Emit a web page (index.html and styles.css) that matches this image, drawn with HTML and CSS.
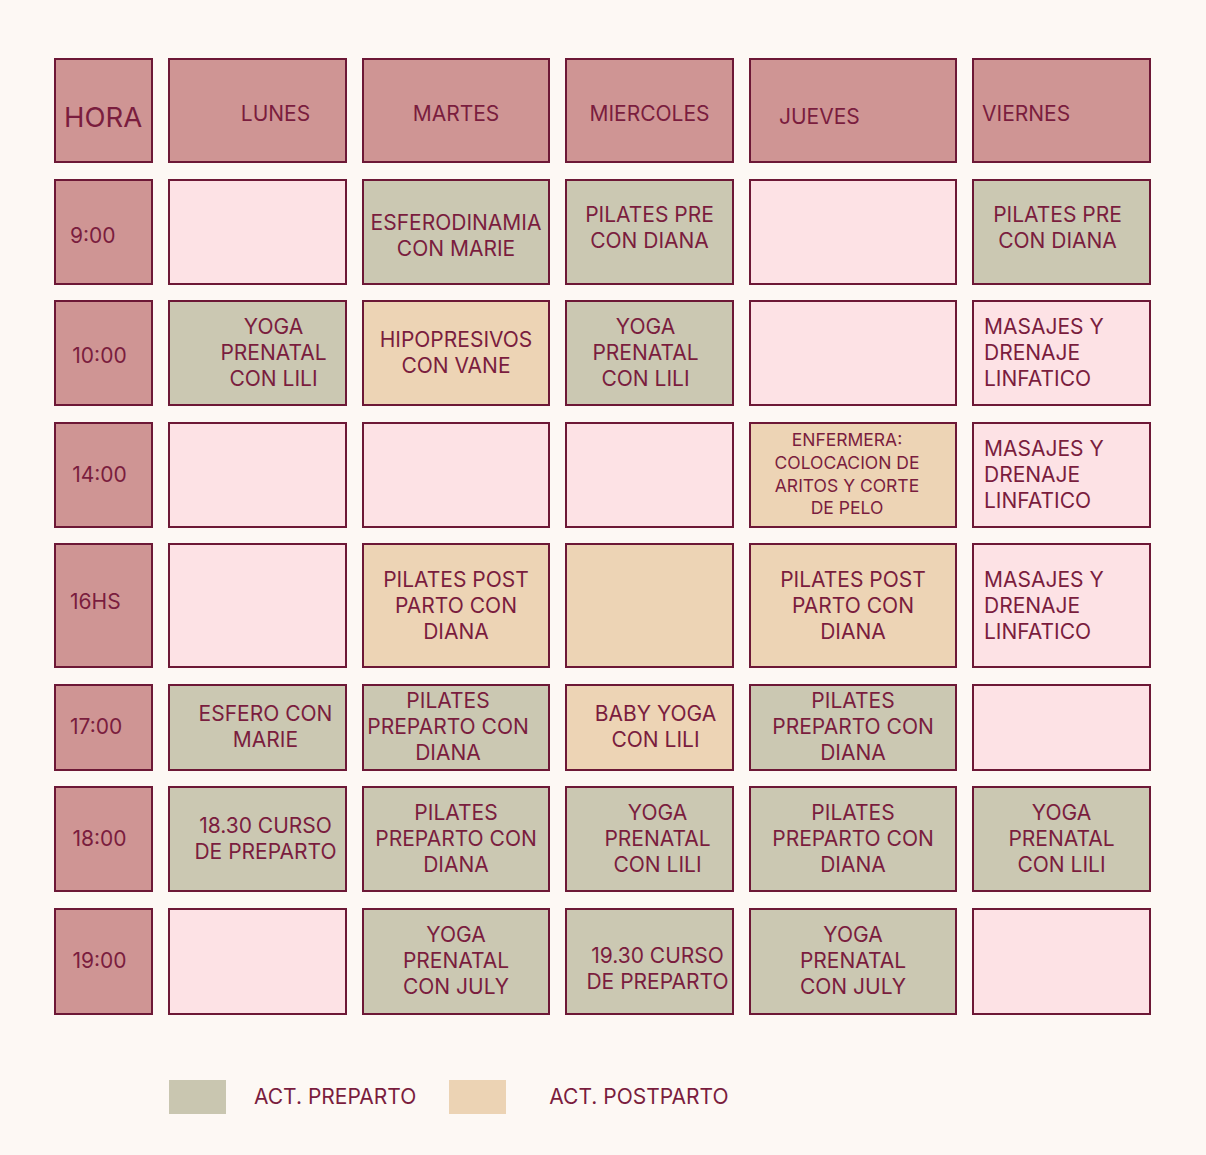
FILE: index.html
```html
<!DOCTYPE html>
<html lang="es">
<head>
<meta charset="utf-8">
<title>Horario</title>
<link rel="stylesheet" href="styles.css">
</head>
<body>
<div class="page">
  <div class="grid">
    <div class="cell head hora l pl8 oy12">HORA</div>
    <div class="cell head ox18 oy6">LUNES</div>
    <div class="cell head oy6">MARTES</div>
    <div class="cell head oy6">MIERCOLES</div>
    <div class="cell head l pl28 oy12">JUEVES</div>
    <div class="cell head l pl8 oy6">VIERNES</div>

    <div class="cell head l pl14 oy4">9:00</div>
    <div class="cell empty"></div>
    <div class="cell pre oy4">ESFERODINAMIA<br>CON MARIE</div>
    <div class="cell pre oy-6">PILATES PRE<br>CON DIANA</div>
    <div class="cell empty"></div>
    <div class="cell pre oy-6 ox-4">PILATES PRE<br>CON DIANA</div>

    <div class="cell head ox-4 oy6">10:00</div>
    <div class="cell pre ox16">YOGA<br>PRENATAL<br>CON LILI</div>
    <div class="cell post">HIPOPRESIVOS<br>CON VANE</div>
    <div class="cell pre ox-4">YOGA<br>PRENATAL<br>CON LILI</div>
    <div class="cell empty"></div>
    <div class="cell empty l pl10 tl">MASAJES Y<br>DRENAJE<br>LINFATICO</div>

    <div class="cell head ox-4">14:00</div>
    <div class="cell empty"></div>
    <div class="cell empty"></div>
    <div class="cell empty"></div>
    <div class="cell post small ox-6">ENFERMERA:<br>COLOCACION DE<br>ARITOS Y CORTE<br>DE PELO</div>
    <div class="cell empty l pl10 tl">MASAJES Y<br>DRENAJE<br>LINFATICO</div>

    <div class="cell head l pl14 oy-6">16HS</div>
    <div class="cell empty"></div>
    <div class="cell post">PILATES POST<br>PARTO CON<br>DIANA</div>
    <div class="cell post"></div>
    <div class="cell post">PILATES POST<br>PARTO CON<br>DIANA</div>
    <div class="cell empty l pl10 tl">MASAJES Y<br>DRENAJE<br>LINFATICO</div>

    <div class="cell head l pl14">17:00</div>
    <div class="cell pre ox8">ESFERO CON<br>MARIE</div>
    <div class="cell pre ox-8">PILATES<br>PREPARTO CON<br>DIANA</div>
    <div class="cell post ox6">BABY YOGA<br>CON LILI</div>
    <div class="cell pre">PILATES<br>PREPARTO CON<br>DIANA</div>
    <div class="cell empty"></div>

    <div class="cell head ox-4">18:00</div>
    <div class="cell pre ox8">18.30 CURSO<br>DE PREPARTO</div>
    <div class="cell pre">PILATES<br>PREPARTO CON<br>DIANA</div>
    <div class="cell pre ox8">YOGA<br>PRENATAL<br>CON LILI</div>
    <div class="cell pre">PILATES<br>PREPARTO CON<br>DIANA</div>
    <div class="cell pre">YOGA<br>PRENATAL<br>CON LILI</div>

    <div class="cell head ox-4">19:00</div>
    <div class="cell empty"></div>
    <div class="cell pre">YOGA<br>PRENATAL<br>CON JULY</div>
    <div class="cell pre ox8 oy8">19.30 CURSO<br>DE PREPARTO</div>
    <div class="cell pre">YOGA<br>PRENATAL<br>CON JULY</div>
    <div class="cell empty"></div>
  </div>

  <div class="legend">
    <span class="swatch sw-pre"></span>
    <span class="legend-label">ACT. PREPARTO</span>
    <span class="swatch sw-post"></span>
    <span class="legend-label">ACT. POSTPARTO</span>
  </div>
</div>
</body>
</html>
```

FILE: styles.css
```css
html, body {
  margin: 0;
  padding: 0;
  background: #fdf8f4;
}

body {
  font-family: "Inter", "Liberation Sans", sans-serif;
  color: #7a1d3e;
}

.page {
  width: 1206px;
  height: 1155px;
  padding: 58px 0 0 54px;
  box-sizing: border-box;
}

.grid {
  display: grid;
  grid-template-columns: 99px 179px 188px 169px 208px 179px;
  grid-template-rows: 105px 106px 106px 106px 125px 87px 106px 107px;
  column-gap: 15px;
  row-gap: 15.5px;
}

.cell {
  box-sizing: border-box;
  border: 2px solid #6d1836;
  display: flex;
  align-items: center;
  justify-content: center;
  text-align: center;
  font-size: 21px;
  line-height: 26px;
  white-space: nowrap;
  letter-spacing: 0;
}

.head { background: #cf9594; }
.empty { background: #fde2e5; }
.pre { background: #cbc8b2; }
.post { background: #edd4b5; }

.hora { font-size: 27.5px; }

.small {
  font-size: 17.5px;
  line-height: 22.6px;
}

.l { justify-content: flex-start; }
.tl { text-align: left; }
.pl8 { padding-left: 8px; }
.pl10 { padding-left: 10px; }
.pl14 { padding-left: 14px; }
.pl28 { padding-left: 28px; }

.ox18 { padding-left: 36px; }
.ox16 { padding-left: 32px; }
.ox8 { padding-left: 16px; }
.ox6 { padding-left: 12px; }
.ox-4 { padding-right: 8px; }
.ox-6 { padding-right: 12px; }
.ox-8 { padding-right: 16px; }
.oy4 { padding-top: 8px; }
.oy6 { padding-top: 6px; }
.oy8 { padding-top: 16px; }
.oy12 { padding-top: 12px; }
.oy-6 { padding-bottom: 8px; }

.legend {
  display: flex;
  align-items: center;
  margin-top: 65px;
  padding-left: 115px;
  font-size: 21px;
}

.swatch {
  width: 57px;
  height: 34px;
  display: block;
}

.sw-pre { background: #c9c6b0; }
.sw-post { background: #ecd3b4; }

.legend-label {
  margin-left: 28px;
  margin-right: 33px;
}

.legend-label + .swatch + .legend-label {
  margin-left: 43px;
}
```
